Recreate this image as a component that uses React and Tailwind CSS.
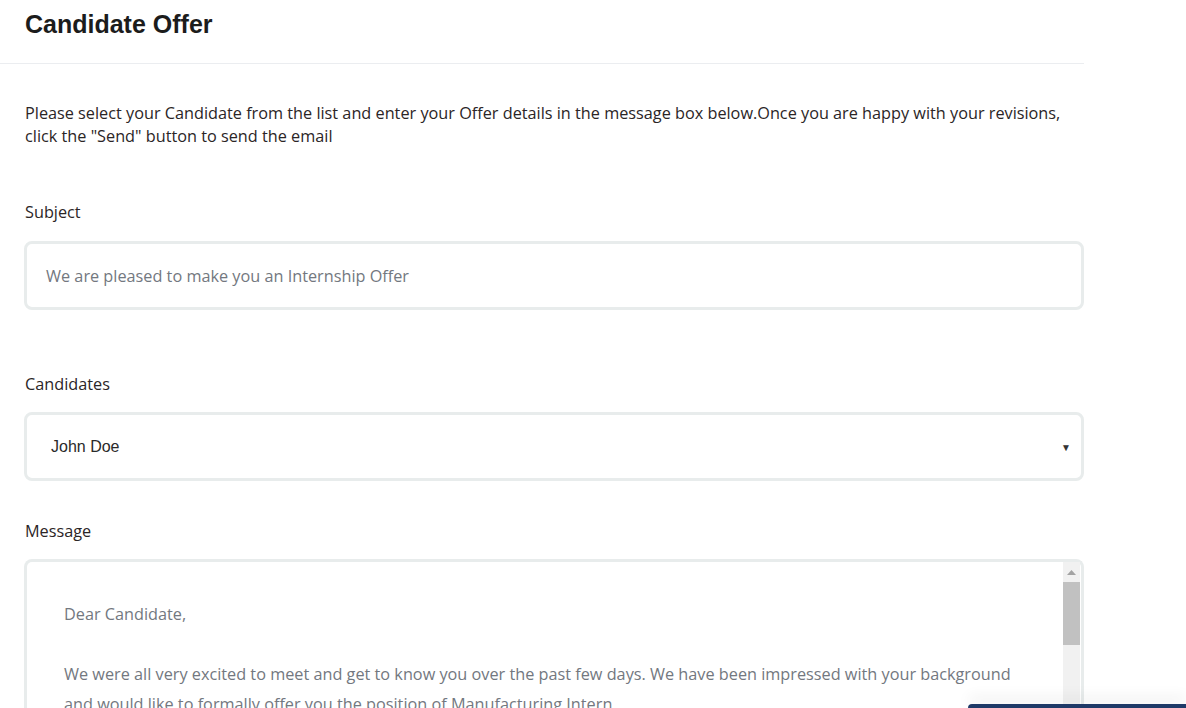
import React from 'react';

function Field({ label, className, gap = 'mt-[17px]', children }) {
  return (
    <div className={className}>
      <p className="text-[16.25px] leading-[24px] text-[#2b2526]">{label}</p>
      <div className={gap}>{children}</div>
    </div>
  );
}

function App() {
  return (
    <div className="relative h-[708px] w-[1186px] overflow-hidden bg-white font-['Open_Sans',sans-serif]">
      <div className="w-[1084px]">
        <div className="h-[64px] border-b border-[#ebedf0] pl-[25px] pt-[10px]">
          <h1 className="font-['Liberation_Sans',Arial,sans-serif] text-[25px] font-bold leading-[29px] text-[#1c1c1c]">
            Candidate Offer
          </h1>
        </div>

        <div className="pl-[25px] pr-[10px]">
          <p className="mt-[38px] text-[16.25px] leading-[23px] text-[#2b2526]">
            Please select your Candidate from the list and enter your Offer details in the message box below.Once you are happy with your revisions,
            <br />
            click the "Send" button to send the email
          </p>

          <Field label="Subject" className="mt-[52px]">
            <div className="-ml-px flex h-[69px] w-[1060px] items-center rounded-[8px] border-[3px] border-[#e8ecec] pl-[19px] pt-[2px] text-[16.25px] text-[#737880]">
              We are pleased to make you an Internship Offer
            </div>
          </Field>

          <Field label="Candidates" className="mt-[62px]" gap="mt-[16px]">
            <div className="-ml-px flex h-[69px] w-[1060px] items-center justify-between rounded-[8px] border-[3px] border-[#e8ecec] pl-[24px] pr-[10px] pt-px font-['Liberation_Sans',Arial,sans-serif] text-[16px] text-[#2a2a2a]">
              <span>John Doe</span>
              <span className="text-[10px] text-[#333]">▼</span>
            </div>
          </Field>

          <Field label="Message" className="mt-[38px]" gap="mt-[16px]">
            <div className="-ml-px flex h-[200px] w-[1060px] rounded-t-[8px] border-[3px] border-b-0 border-[#e8ecec]">
              <div className="flex-1 px-[37px] pt-[37px] text-[16.25px] leading-[30px] text-[#737880]">
                <p>Dear Candidate,</p>
                <p className="mt-[30px]">
                  We were all very excited to meet and get to know you over the past few days. We have been impressed with your background and would like to formally offer you the position of Manufacturing Intern.
                </p>
              </div>
              <div className="mr-px flex w-[17px] flex-col items-center bg-[#f1f1f1]">
                <svg className="mt-[8px]" width="9" height="5" viewBox="0 0 9 5">
                  <path d="M0 5 L4.5 0 L9 5 Z" fill="#a3a3a3" />
                </svg>
                <div className="mt-[7px] h-[63px] w-[17px] bg-[#c1c1c1]" />
              </div>
            </div>
          </Field>
        </div>
      </div>

      <div className="absolute bottom-0 right-0 h-[4px] w-[218px] rounded-tl-[8px] bg-[#1f3a68] shadow-[0_-6px_14px_rgba(0,0,0,0.12)]" />
    </div>
  );
}

export default App;
